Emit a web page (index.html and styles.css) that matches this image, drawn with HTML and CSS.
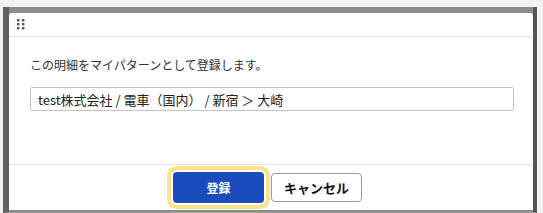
FILE: index.html
```html
<!DOCTYPE html>
<html lang="ja">
<head>
    <meta charset="UTF-8">
    <meta name="viewport" content="width=device-width, initial-scale=1.0">
    <title>マイパターン登録</title>
    <link rel="stylesheet" href="styles.css">
</head>
<body>
    <div class="backdrop">
        <div class="dialog">
            <div class="dialog-header">
                <svg class="drag-handle" width="8" height="11" viewBox="0 0 8 11">
                    <rect x="0" y="0" width="2.4" height="2.4" fill="#555"/>
                    <rect x="5" y="0" width="2.4" height="2.4" fill="#555"/>
                    <rect x="0" y="4" width="2.4" height="2.4" fill="#555"/>
                    <rect x="5" y="4" width="2.4" height="2.4" fill="#555"/>
                    <rect x="0" y="8" width="2.4" height="2.4" fill="#555"/>
                    <rect x="5" y="8" width="2.4" height="2.4" fill="#555"/>
                </svg>
            </div>
            <div class="dialog-body">
                <p class="message">この明細をマイパターンとして登録します。</p>
                <input class="pattern-name" type="text" value="test株式会社 / 電車（国内） / 新宿 ＞ 大崎">
            </div>
            <div class="dialog-footer">
                <button class="btn btn-primary">登録</button>
                <button class="btn btn-secondary">キャンセル</button>
            </div>
        </div>
    </div>
</body>
</html>
```

FILE: styles.css
```css
html, body {
    margin: 0;
    padding: 0;
}

body {
    width: 543px;
    height: 213px;
    overflow: hidden;
    background-color: #f2f2f2;
    font-family: "Noto Sans CJK JP", "Liberation Sans", sans-serif;
    color: #333;
}

.backdrop {
    margin: 7px 6px 0 3px;
    height: 197px;
    padding: 6px 0 2px 0;
    background-color: #8c8c8c;
    border-left: 6px solid #5e6360;
    border-right: 4px solid #555;
    border-bottom: 1px solid #a0a0a0;
    display: flex;
}

.dialog {
    flex: 1;
    background-color: #fff;
    border-radius: 3px 3px 0 0;
    display: flex;
    flex-direction: column;
}

.dialog-header {
    height: 22px;
    border-bottom: 1px solid #e6e6e6;
    padding: 6px 0 0 8px;
    box-sizing: border-box;
    height: 24px;
}

.drag-handle {
    display: block;
}

.dialog-body {
    flex: 1;
    padding: 20px 19px 0 21px;
}

.message {
    margin: 0;
    font-size: 12px;
    line-height: 16px;
    color: #333;
}

.pattern-name {
    display: block;
    box-sizing: border-box;
    width: 100%;
    height: 24px;
    margin-top: 14px;
    padding: 0 7px;
    border: 1px solid #c4c4c4;
    border-radius: 2px;
    font-family: "Noto Sans CJK JP", "Liberation Sans", sans-serif;
    font-size: 13px;
    color: #222;
    outline: none;
}

.dialog-footer {
    height: 45px;
    border-top: 1px solid #e6e6e6;
    display: flex;
    justify-content: center;
    align-items: center;
    padding-right: 7px;
}

.btn {
    width: 91px;
    border-radius: 4px;
    font-family: "Noto Sans CJK JP", "Liberation Sans", sans-serif;
    font-weight: bold;
    cursor: pointer;
    padding: 0;
}

.btn-primary {
    height: 31px;
    font-size: 12px;
    color: #fff;
    background-color: #1a4cbb;
    border: none;
    box-shadow: 0 0 0 2px #fff, 0 0 0 6px #fae38d;
}

.btn-secondary {
    height: 29px;
    margin-left: 7px;
    font-size: 13px;
    color: #111;
    background-color: #fff;
    border: 1px solid #9a9a9a;
}
```
